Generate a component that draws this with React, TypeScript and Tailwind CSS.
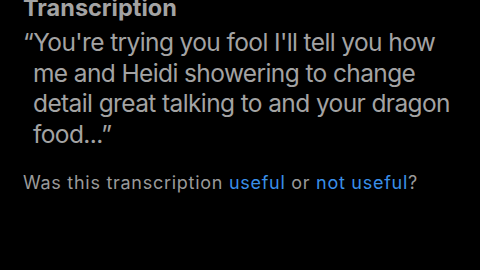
export default function App() {
  return (
    <div className="h-[270px] w-[480px] overflow-hidden bg-black pl-[23px] font-['Inter','Liberation_Sans',sans-serif]">
      <h2 className="-mt-[6px] text-[23.5px] font-bold leading-[28px] text-[#a3a3a3]">
        Transcription
      </h2>
      <p className="mt-[5px] indent-[-10px] pl-[10px] text-[24.5px] leading-[30.5px] tracking-[-0.025em] text-[#a3a3a3] whitespace-nowrap">
        &ldquo;You&apos;re trying you fool I&apos;ll tell you how
        <br />
        me and Heidi showering to change
        <br />
        detail great talking to and your dragon
        <br />
        food...&rdquo;
      </p>
      <p className="mt-[22px] text-[18px] leading-[24px] tracking-[0.04em] text-[#9a9a9a]">
        Was this transcription{" "}
        <span className="text-[#3a8fe8]">useful</span> or{" "}
        <span className="text-[#3a8fe8]">not useful</span>?
      </p>
    </div>
  );
}
